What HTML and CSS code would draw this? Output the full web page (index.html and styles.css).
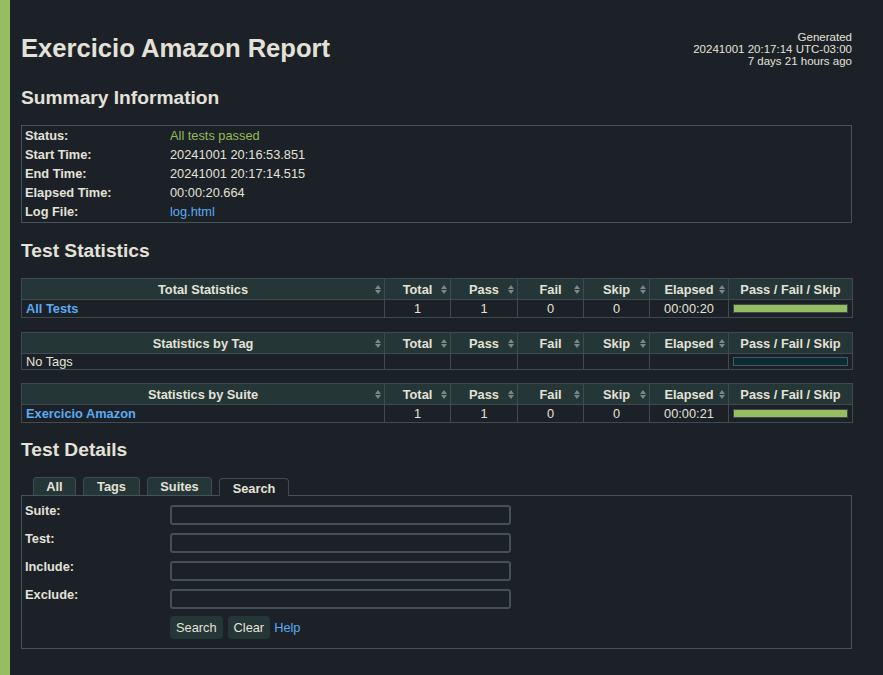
FILE: index.html
```html
<!DOCTYPE html>
<html lang="en">
<head>
<meta charset="utf-8">
<title>Exercicio Amazon Report</title>
<link rel="stylesheet" href="styles.css">
</head>
<body>
<div class="page">
  <header class="top">
    <h1>Exercicio Amazon Report</h1>
    <div class="generated">Generated<br>20241001 20:17:14 UTC-03:00<br>7 days 21 hours ago</div>
  </header>

  <h2 class="h-summary">Summary Information</h2>
  <table class="summary">
    <colgroup><col class="sc1"><col></colgroup>
    <tr><th>Status:</th><td class="pass-text">All tests passed</td></tr>
    <tr><th>Start Time:</th><td>20241001 20:16:53.851</td></tr>
    <tr><th>End Time:</th><td>20241001 20:17:14.515</td></tr>
    <tr><th>Elapsed Time:</th><td>00:00:20.664</td></tr>
    <tr><th>Log File:</th><td><a href="#">log.html</a></td></tr>
  </table>

  <h2 class="h-stats">Test Statistics</h2>

  <table class="stats">
    <colgroup><col class="c1"><col class="c2"><col class="c3"><col class="c4"><col class="c5"><col class="c6"><col class="c7"></colgroup>
    <thead>
      <tr>
        <th>Total Statistics<span class="sort"></span></th>
        <th>Total<span class="sort"></span></th>
        <th>Pass<span class="sort"></span></th>
        <th>Fail<span class="sort"></span></th>
        <th>Skip<span class="sort"></span></th>
        <th>Elapsed<span class="sort"></span></th>
        <th>Pass / Fail / Skip</th>
      </tr>
    </thead>
    <tbody>
      <tr>
        <td class="name"><a href="#">All Tests</a></td>
        <td>1</td><td>1</td><td>0</td><td>0</td><td>00:00:20</td>
        <td class="graph"><div class="bar pass"></div></td>
      </tr>
    </tbody>
  </table>

  <table class="stats tag">
    <colgroup><col class="c1"><col class="c2"><col class="c3"><col class="c4"><col class="c5"><col class="c6"><col class="c7"></colgroup>
    <thead>
      <tr>
        <th>Statistics by Tag<span class="sort"></span></th>
        <th>Total<span class="sort"></span></th>
        <th>Pass<span class="sort"></span></th>
        <th>Fail<span class="sort"></span></th>
        <th>Skip<span class="sort"></span></th>
        <th>Elapsed<span class="sort"></span></th>
        <th>Pass / Fail / Skip</th>
      </tr>
    </thead>
    <tbody>
      <tr class="short">
        <td class="name plain">No Tags</td>
        <td></td><td></td><td></td><td></td><td></td>
        <td class="graph"><div class="bar empty"></div></td>
      </tr>
    </tbody>
  </table>

  <table class="stats suite">
    <colgroup><col class="c1"><col class="c2"><col class="c3"><col class="c4"><col class="c5"><col class="c6"><col class="c7"></colgroup>
    <thead>
      <tr>
        <th>Statistics by Suite<span class="sort"></span></th>
        <th>Total<span class="sort"></span></th>
        <th>Pass<span class="sort"></span></th>
        <th>Fail<span class="sort"></span></th>
        <th>Skip<span class="sort"></span></th>
        <th>Elapsed<span class="sort"></span></th>
        <th>Pass / Fail / Skip</th>
      </tr>
    </thead>
    <tbody>
      <tr>
        <td class="name"><a href="#">Exercicio Amazon</a></td>
        <td>1</td><td>1</td><td>0</td><td>0</td><td>00:00:21</td>
        <td class="graph"><div class="bar pass"></div></td>
      </tr>
    </tbody>
  </table>

  <h2 class="h-details">Test Details</h2>

  <div class="tabs">
    <span class="tab t-all">All</span>
    <span class="tab t-tags">Tags</span>
    <span class="tab t-suites">Suites</span>
    <span class="tab t-search active">Search</span>
  </div>
  <div class="panel">
    <div class="frow"><label>Suite:</label><input type="text"></div>
    <div class="frow"><label>Test:</label><input type="text"></div>
    <div class="frow"><label>Include:</label><input type="text"></div>
    <div class="frow"><label>Exclude:</label><input type="text"></div>
    <div class="buttons">
      <button type="button">Search</button>
      <button type="button">Clear</button>
      <a href="#" class="help">Help</a>
    </div>
  </div>
</div>
</body>
</html>
```

FILE: styles.css
```css
html, body {
  margin: 0;
  padding: 0;
  background: #1c2127;
}
body {
  border-left: 10px solid #97bd61;
  min-height: 675px;
  box-sizing: border-box;
  color: #e4e2d8;
  font-family: "Liberation Sans", Arial, sans-serif;
  font-size: 12.8px;
}
.page {
  padding: 0 31px 0 11px;
}
a {
  color: #5aacf5;
  text-decoration: none;
}
.top {
  display: flex;
  justify-content: space-between;
  align-items: flex-start;
  padding-top: 31px;
  height: 36px;
}
h1 {
  margin: 2px 0 0 0;
  font-size: 25.6px;
  line-height: 30px;
  font-weight: bold;
}
.generated {
  font-size: 11.52px;
  line-height: 12px;
  text-align: right;
  white-space: nowrap;
}
h2 {
  margin: 0;
  font-size: 19.2px;
  line-height: 22px;
  font-weight: bold;
}
.h-summary { margin-top: 20px; margin-bottom: 16px; }
.h-stats { margin-top: 17px; margin-bottom: 16px; }
.h-details { margin-top: 16px; margin-bottom: 16px; }

.summary {
  width: 100%;
  table-layout: fixed;
  border: 1px solid #46535a;
  border-collapse: separate;
  border-spacing: 0;
  padding-bottom: 1px;
}
.sc1 { width: 148px; }
.summary th, .summary td {
  height: 19px;
  padding: 0 3px;
  text-align: left;
  vertical-align: middle;
  white-space: nowrap;
}
.summary td { padding-left: 0; }
.summary th {
  font-weight: bold;
}
.pass-text { color: #8fbd57; }

.stats {
  width: 100%;
  table-layout: fixed;
  border-collapse: collapse;
  margin-bottom: 14px;
}
.stats.tag { margin-bottom: 13px; }
.stats.suite { margin-bottom: 0; }
.c1 { width: 363px; }
.c2 { width: 66px; }
.c3 { width: 67px; }
.c4 { width: 66px; }
.c5 { width: 66px; }
.c6 { width: 79px; }
.c7 { width: 124px; }
.stats th, .stats td {
  border: 1px solid #3e4b53;
  padding: 0 4px;
  white-space: nowrap;
  overflow: hidden;
}
.stats th {
  position: relative;
  height: 20px;
  background: #253636;
  font-weight: bold;
  text-align: center;
}
.stats td {
  height: 17px;
  text-align: center;
}
.stats tr.short td { height: 15px; }
.stats td.name {
  text-align: left;
  padding-left: 4px;
  font-weight: bold;
}
.stats td.name.plain { font-weight: normal; }
.sort {
  position: absolute;
  right: 2px;
  top: 6px;
  width: 7px;
  height: 9px;
}
.sort::before, .sort::after {
  content: "";
  position: absolute;
  left: 0;
  width: 0;
  height: 0;
  border-left: 3.5px solid transparent;
  border-right: 3.5px solid transparent;
}
.sort::before {
  top: 0;
  border-bottom: 4px solid #7d868a;
}
.sort::after {
  bottom: 0;
  border-top: 4px solid #7d868a;
}
.stats td.graph {
  padding: 0 4px;
  vertical-align: middle;
}
.bar {
  height: 7px;
  border: 1px solid #3e4b53;
}
.bar.pass { background: #97bd61; }
.bar.empty { background: #0d2b34; border-color: #3f5a63; }

.tabs {
  display: flex;
  align-items: flex-end;
  gap: 7px;
  padding-left: 12px;
  height: 18px;
}
.tab {
  box-sizing: border-box;
  height: 18px;
  line-height: 17px;
  border: 1px solid #3e4b53;
  border-bottom: none;
  border-radius: 4px 4px 0 0;
  background: #253636;
  text-align: center;
  font-weight: bold;
}
.t-all { width: 43px; }
.t-tags { width: 57px; }
.t-suites { width: 65px; }
.t-search { width: 70px; }
.tab.active {
  background: #1c2127;
  height: 18px;
  line-height: 19px;
  margin-bottom: -1px;
  position: relative;
  z-index: 1;
}
.panel {
  border: 1px solid #46535a;
  padding: 7px 0 9px 3px;
}
.frow {
  display: flex;
  align-items: flex-start;
  height: 28px;
}
.frow label {
  width: 145px;
  line-height: 16px;
  font-weight: bold;
}
.frow input {
  box-sizing: border-box;
  width: 341px;
  height: 20px;
  margin: 2px 0 0 0;
  padding: 0 4px;
  background: #1c2127;
  border: 2px solid #444f56;
  border-radius: 3px;
  color: #e4e2d8;
  font: inherit;
}
.buttons {
  display: flex;
  align-items: center;
  gap: 5px;
  margin: 1px 0 0 145px;
  height: 23px;
}
.buttons button {
  height: 23px;
  padding: 0 6px;
  border: none;
  border-radius: 4px;
  background: #253636;
  color: #e4e2d8;
  font: inherit;
  font-size: 12.8px;
}
.buttons .help { margin-left: -1px; }
```
